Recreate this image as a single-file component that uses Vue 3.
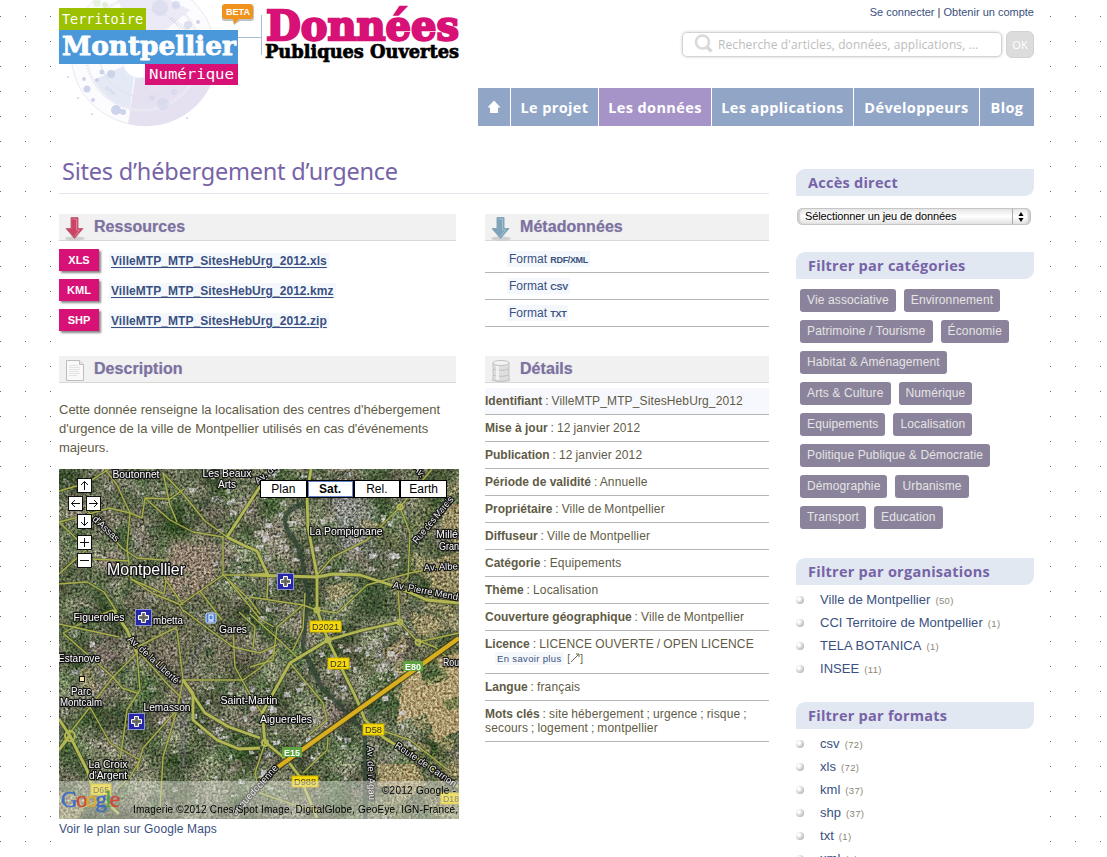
<script setup>
const nav = [
  { label: 'Le projet', cls: 'n1' },
  { label: 'Les données', cls: 'n2 active' },
  { label: 'Les applications', cls: 'n3' },
  { label: 'Développeurs', cls: 'n4' },
  { label: 'Blog', cls: 'n5' },
]
const files = [
  ['XLS', 'VilleMTP_MTP_SitesHebUrg_2012.xls'],
  ['KML', 'VilleMTP_MTP_SitesHebUrg_2012.kmz'],
  ['SHP', 'VilleMTP_MTP_SitesHebUrg_2012.zip'],
]
const formatsMeta = ['rdf/xml', 'csv', 'txt']
const details = [
  ['Identifiant', 'VilleMTP_MTP_SitesHebUrg_2012'],
  ['Mise à jour', '12 janvier 2012'],
  ['Publication', '12 janvier 2012'],
  ['Période de validité', 'Annuelle'],
  ['Propriétaire', 'Ville de Montpellier'],
  ['Diffuseur', 'Ville de Montpellier'],
  ['Catégorie', 'Equipements'],
  ['Thème', 'Localisation'],
  ['Couverture géographique', 'Ville de Montpellier'],
  ['Licence', 'LICENCE OUVERTE / OPEN LICENCE', true],
  ['Langue', 'français'],
  ['Mots clés', 'site hébergement ; urgence ; risque ; secours ; logement ; montpellier'],
]
const tags = [
  ['Vie associative', 'Environnement'],
  ['Patrimoine / Tourisme', 'Économie'],
  ['Habitat & Aménagement'],
  ['Arts & Culture', 'Numérique'],
  ['Equipements', 'Localisation'],
  ['Politique Publique & Démocratie'],
  ['Démographie', 'Urbanisme'],
  ['Transport', 'Education'],
]
const orgs = [['Ville de Montpellier', 50], ['CCI Territoire de Montpellier', 1], ['TELA BOTANICA', 1], ['INSEE', 11]]
const formats = [['csv', 72], ['xls', 72], ['kml', 37], ['shp', 37], ['txt', 1], ['xml', 1]]

// Deterministic generator for the small parcels and roofs of the aerial view.
let seed = 7
const rnd = () => (seed = (seed * 16807) % 2147483647) / 2147483647
const pick = (a) => a[Math.floor(rnd() * a.length)]
const parcels = Array.from({ length: 620 }, () => {
  const x = rnd() * 400, y = rnd() * 350
  const rural = x > 300 + rnd() * 60
  const w = rural ? 8 + rnd() * 20 : 3 + rnd() * 9
  return {
    x, y, w, h: w * (0.4 + rnd() * 0.7), r: pick([-38, -30, 20, 35, 60]),
    f: rural ? pick(['#8c8460', '#4b5b36', '#6d6f4b', '#a08e66', '#3b4a2e']) : pick(['#5a6350', '#3d5236', '#7d7a70', '#465a3d', '#8a8880', '#6b6357', '#384d33']),
    o: 0.25 + rnd() * 0.4,
  }
})
const roofs = Array.from({ length: 260 }, () => {
  const a = pick([[285, 65, 60, 55], [265, 260, 80, 60], [150, 270, 60, 60], [200, 60, 40, 90], [150, 100, 190, 200], [300, 200, 50, 40]])
  return { x: a[0] + (rnd() - 0.5) * a[2] * 2, y: a[1] + (rnd() - 0.5) * a[3] * 2, w: 2 + rnd() * 6, h: 2 + rnd() * 4, f: pick(['#b9b7b4', '#cfcbd0', '#9a97a0', '#a89f96']) }
})
const roads = [
  '0,22 28,14 50,0', '46,0 58,16 71,44 83,49 86,29 111,30 125,20', '86,29 111,51 134,63 164,68',
  '104,4 111,36 118,53', '104,4 124,25 146,52 168,68', '71,44 68,80 72,110 95,125 120,135 125,143',
  '201,106 164,106 141,122 121,136', '26,39 63,79 78,89 104,91 106,110 124,136', '71,44 50,39 20,48 0,53',
  '0,115 28,113 45,123 58,143', '72,110 105,125 107,112', '164,68 164,106', '0,53 28,80 0,105', '34,90 70,92',
  '191,106 209,104 208,131', '191,128 244,136 258,141 278,144 308,116 351,104 400,94', '258,106 274,88 308,71 341,38 373,0',
  '341,38 351,64 349,108 339,118 341,153 359,173', '359,173 400,164', '246,124 244,160 234,181', '191,145 220,171 240,190',
  '191,198 214,191 218,158 244,136', '231,194 264,234 268,251 250,266', '206,274 196,304 201,324 241,338 262,342',
  '244,304 268,281 269,268', '324,262 351,271 388,300', '357,171 376,178 391,191', '4,164 54,208 63,219 78,224', '4,164 30,150 54,141',
  '78,184 54,208 31,238 11,264 0,280', '78,184 81,221 68,241 64,271 58,308', '118,161 124,211', '78,178 118,158', '118,211 84,181',
  '124,211 184,211 201,199 220,180', '124,141 151,161 174,178 201,184 218,176', '174,161 176,198 194,231 203,244', '124,211 118,241 104,288 101,341',
  '31,238 51,274 81,291 71,308 58,320', '118,241 84,279 78,300', '81,184 111,218 123,229', '0,155 60,168', '180,143 196,158 194,180', '20,340 44,330 28,301',
  '170,112 201,150 215,158', '141,122 163,151', '164,106 190,130 201,145',
]
const mainRoads = [
  '204,13 168,68', '168,68 184,76 198,82 208,104 209,107', '252,0 248,25 249,58 258,106 258,141 269,171',
  '191,106 258,108 274,105 301,106 338,118 368,131 400,134', '341,153 304,161 269,171 231,194 216,221 203,244 206,273 228,291 241,308 258,349',
  '269,171 298,231 306,251 324,268 362,292 399,318', '54,141 68,161 78,184', '124,211 134,224 134,251 158,271 180,280 201,279', '124,211 146,244 170,258 201,269',
  '11,267 28,301 34,321 60,345', '0,250 11,267 0,281',
]
const labels = [
  [77, 9, 'Boutonnet', 47, 10.5], [168, 8, 'Les Beaux', 49, 10.5], [168, 19, 'Arts', 18, 10.5],
  [287, 66, 'La Pompignane', 73, 10.5], [388, 69, 'Millé', 22, 10.5], [390, 81, 'Gran', 20, 10.5],
  [40, 152, 'Figuerolles', 51, 10.5], [109, 155, 'mbetta', 30, 10.5], [174, 164, 'Gares', 28, 10.5],
  [20, 193, 'Estanove', 42, 10.5], [22, 226, 'Parc', 20, 10.5], [22, 237, 'Montcalm', 42, 10.5],
  [108, 242, 'Lemasson', 47, 10.5], [190, 235, 'Saint-Martin', 57, 10.5], [227, 254, 'Aiguerelles', 52, 10.5],
  [49, 299, 'La Croix', 39, 10.5], [49, 310, "d'Argent", 38, 10.5], [392, 197, 'Rou', 16, 10.5], [87, 106, 'Montpellier', 78, 16],
]
const shields = [
  [251, 152, 31, 'D2021'], [269, 189, 21, 'D21'], [304, 255, 21, 'D58'], [233, 307, 26, 'D988'], [382, 324, 20, 'D18'], [32, 315, 20, 'D65'],
]
const crosses = [[218, 104], [76, 140], [69, 244]]
const pads = [[19, 10, 'M4.500 7.500 8 4l3.500 3.500M8 4v8.500'], [10, 28, 'M7.500 4.500 4 8l3.500 3.500M4 8h8.500'], [28, 28, 'M8.500 4.500 12 8 8.500 11.500M12 8H3.500'], [19, 46, 'M4.500 8.500 8 12l3.500-3.500M8 12V3.500'], [19, 67, 'M3.500 8h9M8 3.500v9'], [19, 85, 'M3.500 8h9']]
</script>

<template>
  <div class="page">
    <header class="header">
      <svg class="logo" width="420" height="130" viewBox="50 0 420 130">
        <g class="disc">
          <circle cx="143" cy="53" r="72" fill="#fcfcfe" stroke="#e9e8f1" />
          <path d="M138 60 128 124A72 72 0 0 0 213 80Z" fill="#e5e1f1" />
          <path d="M138 53 118 0h52l20 10Z" fill="#eceaf6" />
          <path d="M136 60 94 80a52 52 0 0 0 36 29Z" fill="#e3eaf6" />
          <path d="M98 10 84 30l14-4z" fill="#edf5e2" />
          <circle cx="139" cy="62" r="16" fill="#fff" stroke="#eceff7" />
          <circle cx="143" cy="53" r="44" fill="none" stroke="#e1e3ef" />
          <circle cx="143" cy="53" r="57" fill="none" stroke="#ecebf4" stroke-width="3" stroke-dasharray="2 1" />
          <g fill="#cdd3ea">
            <circle cx="116" cy="110" r="5" /><circle cx="123" cy="112" r="3" /><circle cx="111" cy="74" r="4" /><circle cx="102" cy="72" r="2.500" /><circle cx="87" cy="89" r="3.500" /><circle cx="93" cy="100" r="2" /><circle cx="84" cy="79" r="2" /><circle cx="97" cy="80" r="2" />
            <circle cx="163" cy="104" r="6" opacity=".5" /><circle cx="152" cy="98" r="3" opacity=".5" /><circle cx="174" cy="92" r="3" opacity=".5" /><circle cx="160" cy="8" r="8" opacity=".5" /><circle cx="176" cy="5" r="4" opacity=".7" /><circle cx="188" cy="25" r="4" opacity=".7" /><circle cx="198" cy="22" r="2" /><circle cx="105" cy="5" r="3" fill="#e1eed7" /><circle cx="97" cy="3" r="4" fill="#e9f2e2" />
            <circle cx="68" cy="77" r="1" /><circle cx="78" cy="98" r="1" /><circle cx="187" cy="118" r="1" /><circle cx="92" cy="114" r="1" />
          </g>
          <path d="M106 88 115 94M171 18 188 31" stroke="#c9c7d0" stroke-width="4" stroke-dasharray="1 1.500" opacity=".6" />
        </g>
        <rect x="59" y="8" width="87" height="22" fill="#9cc100" />
        <rect x="59" y="30" width="179" height="34" fill="#4a97da" />
        <rect x="145" y="64" width="93" height="21" fill="#d71175" />
        <text class="pix" x="62" y="24" font-size="14" textLength="81" lengthAdjust="spacingAndGlyphs">Territoire</text>
        <text class="pix" x="149" y="79" font-size="14" textLength="85" lengthAdjust="spacingAndGlyphs">Numérique</text>
        <text class="slab white" x="62" y="55" font-size="25.500" textLength="174" lengthAdjust="spacingAndGlyphs">Montpellier</text>
        <path d="M238 37.500h23M261.500 15v40" stroke="#a9bbd7" fill="none" />
        <path d="M224 5h27q3 0 3 3v10q0 3-3 3h-11l-6 4-1-4h-9q-2 0-2-3V7q0-2 2-2z" fill="#9a9a9a" opacity=".6" />
        <path d="M225 4h25q3 0 3 3v9q0 3-3 3h-11l-5 5-1-5h-8q-3 0-3-3V7q0-3 3-3z" fill="#f0931c" />
        <text x="226" y="15.300" class="beta" textLength="24" lengthAdjust="spacingAndGlyphs">BETA</text>
        <text class="slab pink" x="266" y="40" font-size="41.500" textLength="193" lengthAdjust="spacingAndGlyphs">Données</text>
        <text class="slab black" x="265" y="58" font-size="18.500" textLength="194" lengthAdjust="spacingAndGlyphs">Publiques Ouvertes</text>
      </svg>
      <div class="top">
        <div class="account"><a>Se connecter</a> | <a>Obtenir un compte</a></div>
        <div class="search">
          <div class="field">
            <svg width="22" height="22" viewBox="0 0 22 22" fill="none" stroke="#d9d9d9"><circle cx="9.500" cy="9" r="6.500" stroke-width="2.600" /><path d="m14 14 4.500 4.500" stroke-width="3.600" /></svg>
            <span>Recherche d'articles, données, applications, ...</span>
          </div>
          <div class="ok"><span>OK</span></div>
        </div>
        <nav class="nav">
          <a class="home"><svg width="14" height="14" viewBox="0 0 14 14"><path d="M7 .5 13.500 7.500H11V13H3V7.500H.5z" fill="#fff" /></svg></a>
          <a v-for="n in nav" :key="n.label" :class="n.cls"><span>{{ n.label }}</span></a>
        </nav>
      </div>
    </header>

    <div class="body">
      <main class="main">
        <h1><span>Sites d’hébergement d’urgence</span></h1>
        <div class="cols">
          <div class="left">
            <section class="res">
              <h2>
                <svg width="24" height="26" viewBox="0 0 24 26"><ellipse cx="12" cy="23.500" rx="10" ry="2" fill="#bbb" opacity=".6" /><path d="M8 2.500h7v11h5l-8.500 10-8.500-10h5z" fill="#cb4365" stroke="#c06a80" /><path d="M9.500 4h4v11h3l-5 6.500" fill="none" stroke="#dd8095" /></svg>
                Ressources
              </h2>
              <div v-for="f in files" :key="f[0]" class="file"><b>{{ f[0] }}</b><a>{{ f[1] }}</a></div>
            </section>
            <section>
              <h2>
                <svg width="24" height="26" viewBox="0 0 24 26"><path d="M3.500 3.500h13l4 4v16h-17z" fill="#f9f9f9" stroke="#bdbdbd" /><path d="M16.500 3.500v4h4" fill="#e5e5e5" stroke="#bdbdbd" /><path d="M6 8.500h9M6 10.500h11M6 12.500h11M6 14.500h10M6 16.500h11M6 18.500h8" stroke="#e2e2e2" /></svg>
                Description
              </h2>
              <p>Cette donnée renseigne la localisation des centres d'hébergement d'urgence de la ville de Montpellier utilisés en cas d'événements majeurs.</p>
              <div class="map">
                <svg width="400" height="350" viewBox="0 0 400 350">
                  <defs>
                    <filter id="grain" x="0" y="0" width="100%" height="100%" color-interpolation-filters="sRGB">
                      <feTurbulence type="fractalNoise" baseFrequency=".42" numOctaves="3" seed="4" />
                      <feColorMatrix values="1.500 .5 0 0 -.45  1.500 .5 0 0 -.44  1.500 .5 0 0 -.45  0 0 0 0 1" />
                    </filter>
                    <filter id="land" x="0" y="0" width="100%" height="100%" color-interpolation-filters="sRGB">
                      <feTurbulence type="fractalNoise" baseFrequency=".03" numOctaves="4" seed="9" />
                      <feColorMatrix values=".9 0 0 0 -.07  .65 .25 0 0 -.05  .8 0 0 0 -.1  0 0 0 0 1" />
                    </filter>
                    <filter id="soft" x="-20%" y="-20%" width="140%" height="140%"><feGaussianBlur stdDeviation="5" /></filter>
                  </defs>
                  <rect width="400" height="350" fill="#56604a" />
                  <rect width="400" height="350" filter="url(#land)" opacity=".6" />
                  <g filter="url(#soft)">
                    <path d="M112 70 155 76 160 110 125 136 105 110Z" fill="#857566" />
                    <path d="M60 120h110l20 90H90z" fill="#65604f" opacity=".6" />
                    <path d="M270 15 310 30 325 90 280 80Z" fill="#85868a" opacity=".6" />
                  </g>
                  <rect v-for="(p, i) in parcels" :key="'p' + i" :x="p.x" :y="p.y" :width="p.w" :height="p.h" :fill="p.f" :opacity="p.o" :transform="`rotate(${p.r} ${p.x} ${p.y})`" />
                  <g fill="#a59068">
                    <path d="M346 195 400 184v78l-22 8-12-26-28 10z" /><path d="M318 295h40l10 22h-48z" opacity=".75" /><path d="M386 35h14v45l-18-20z" opacity=".7" /><path d="M378 90 400 82v50l-30-12z" opacity=".6" /><path d="M266 118 290 112 300 120 272 134z" opacity=".5" /><path d="M0 322 30 330 20 350H0z" opacity=".6" /><path d="M20 200 32 198 38 222 24 224z" opacity=".4" /><path d="M352 150 372 146 382 160 360 168z" opacity=".5" />
                  </g>
                  <path d="M362 205l24-7 4 12-22 7zM384 232l16-5v12l-12 3z" fill="#5d6a40" opacity=".7" />
                  <g fill="#38512f" opacity=".75"><path d="M306 226 330 220 342 236 312 246z" /><path d="M290 118 324 110 330 150 300 140z" opacity=".6" /><path d="M360 196 378 190 382 206 364 212z" /><path d="M56 62l12-6 6 18-10 12z" /><path d="M8 270l22 18-6 22-20-10z" opacity=".5" /><path d="M266 300l28 10-4 30-30-6z" opacity=".6" /></g>
                  <rect v-for="(p, i) in roofs" :key="'r' + i" :x="p.x" :y="p.y" :width="p.w" :height="p.h" :fill="p.f" opacity=".7" transform="rotate(-6 200 175)" />
                  <path d="M148 166 126 205 124 300" stroke="#60615c" stroke-width="8" fill="none" opacity=".6" />
                  <rect class="grain" width="400" height="350" filter="url(#grain)" />
                  <path d="M246 34C220 42 222 56 236 72 246 88 244 108 249 124L244 178 262 218 282 238 306 264 306 350" stroke="#2d4233" stroke-width="4.500" fill="none" opacity=".75" />
                  <g fill="none" stroke-linejoin="round">
                    <polyline v-for="r in roads" :key="'a' + r" :points="r" stroke="#3e4722" stroke-width="3" opacity=".45" />
                    <polyline v-for="r in mainRoads" :key="'b' + r" :points="r" stroke="#3e4722" stroke-width="5" opacity=".5" />
                    <polyline v-for="r in roads" :key="'c' + r" :points="r" stroke="#aaaf4c" stroke-width="1.400" />
                    <polyline v-for="r in mainRoads" :key="'d' + r" :points="r" stroke="#b3b854" stroke-width="2.800" />
                    <path d="M400 169 219 298" stroke="#40401c" stroke-width="7" opacity=".8" /><path d="M400 169 219 298" stroke="#d9ae1f" stroke-width="4" />
                    <path d="M219 298 176 350" stroke="#c9c8a0" stroke-width="2" opacity=".6" />
                    <g stroke="#b3b854" stroke-width="2"><circle cx="11" cy="267" r="5" /><circle cx="341" cy="38" r="2.500" /><circle cx="206" cy="274" r="3" /><circle cx="258" cy="141" r="2.500" /><circle cx="269" cy="171" r="2.500" /><circle cx="341" cy="153" r="2.500" /><circle cx="359" cy="173" r="2.500" /></g>
                  </g>
                  <g class="lab">
                    <text v-for="l in labels" :key="l[2]" :x="l[0]" :y="l[1]" :font-size="l[4]" :textLength="l[3]" lengthAdjust="spacingAndGlyphs">{{ l[2] }}</text>
                    <g class="street">
                      <text transform="translate(45 62) rotate(43)">d'Assas</text>
                      <text transform="translate(68 171) rotate(42)" textLength="66">Av. de la Liberté</text>
                      <text transform="translate(374 51) rotate(-50)" dy="3" textLength="58">Rue des Mareis</text>
                      <text transform="translate(382 101) rotate(-3)">Av. Albe</text>
                      <text transform="translate(366 125) rotate(11)" textLength="66">Av. Pierre Mend</text>
                      <text transform="translate(365 298) rotate(34)" textLength="72">Route de Carnon</text>
                      <text transform="translate(309 304) rotate(88)" textLength="54">Av. de l'Agau</text>
                      <text transform="translate(196 321) rotate(-48)" dy="3" textLength="64">anguedocienne</text>
                      <text transform="translate(209 7) rotate(-40)">Av. de</text>
                      <text transform="translate(358 4) rotate(52)">Av.</text>
                    </g>
                  </g>
                  <g v-for="s in shields" :key="s[3]" class="shield"><rect :x="s[0]" :y="s[1]" :width="s[2]" height="11" fill="#f5d90b" stroke="#d0b400" /><text :x="s[0] + s[2] / 2" :y="s[1] + 9" fill="#333" :textLength="s[2] - 4" lengthAdjust="spacingAndGlyphs">{{ s[3] }}</text></g>
                  <g class="shield" font-weight="bold"><rect x="344" y="192" width="20" height="10" fill="#5fa341" /><text x="354" y="200.500" fill="#fff" textLength="16" lengthAdjust="spacingAndGlyphs">E80</text><rect x="223" y="278" width="20" height="10" fill="#5fa341" /><text x="233" y="286.500" fill="#fff" textLength="16" lengthAdjust="spacingAndGlyphs">E15</text></g>
                  <g v-for="c in crosses" :key="c[0]" :transform="`translate(${c[0]} ${c[1]})`"><rect x=".5" y=".5" width="16" height="16" fill="#2727a5" stroke="#8b94cf" /><path d="M6.500 3.500h4v3h3v4h-3v3h-4v-3h-3v-4h3z" fill="#77786d" stroke="#fff" /><path d="M8.500 5v7M5 8.500h7" stroke="#5d5e55" /></g>
                  <g transform="translate(147 144)"><rect width="10" height="10" rx="1.500" fill="#4c7fd0" stroke="#cfdcf2" /><rect x="3" y="2" width="4" height="5" fill="none" stroke="#fff" /><path d="M2.500 9l1-1h3l1 1" stroke="#fff" fill="none" /></g>
                  <rect x="20.500" y="207.500" width="5" height="5" fill="#f7e4b1" stroke="#111" />
                  <rect y="312" width="400" height="38" fill="#e9e9df" opacity=".45" />
                  <text class="google" x="2" y="338" font-size="23" textLength="59"><tspan fill="#3565c8" stroke="#3565c8">G</tspan><tspan fill="#d14232" stroke="#d14232">o</tspan><tspan fill="#e0ac20" stroke="#e0ac20">o</tspan><tspan fill="#3565c8" stroke="#3565c8">g</tspan><tspan fill="#4f9b4a" stroke="#4f9b4a">l</tspan><tspan fill="#d14232" stroke="#d14232">e</tspan></text>
                  <text class="credit" x="323" y="325" textLength="74">©2012 Google -</text>
                  <text class="credit" x="74" y="344" textLength="325">Imagerie ©2012 Cnes/Spot Image, DigitalGlobe, GeoEye, IGN-France,</text>
                  <g v-for="(p, i) in pads" :key="'k' + i" :transform="`translate(${p[0] - 1} ${p[1] - 1})`"><rect x=".5" y=".5" width="14" height="14" fill="#fff" stroke="#111" /><path :d="p[2]" transform="translate(-.5 -.5)" fill="none" stroke="#111" /></g>
                </svg>
                <div class="types"><span>Plan</span><span class="on">Sat.</span><span>Rel.</span><span>Earth</span></div>
              </div>
              <a class="gmaps">Voir le plan sur Google Maps</a>
            </section>
          </div>
          <div class="right">
            <section class="meta">
              <h2>
                <svg width="24" height="26" viewBox="0 0 24 26"><ellipse cx="12" cy="23.500" rx="10" ry="2" fill="#bbb" opacity=".6" /><path d="M8 2.500h7v11h5l-8.500 10-8.500-10h5z" fill="#7ea4bb" stroke="#86a6b9" /><path d="M9.500 4h4v11h3l-5 6.500" fill="none" stroke="#a3c0d0" /></svg>
                Métadonnées
              </h2>
              <div v-for="f in formatsMeta" :key="f" class="mrow"><a>Format <i>{{ f }}</i></a></div>
            </section>
            <section>
              <h2>
                <svg width="24" height="26" viewBox="0 0 24 26"><ellipse cx="12" cy="23" rx="10" ry="2" fill="#d5d5d5" /><g fill="#dedede" stroke="#c2c2c2"><path d="M4 18v4c0 3 16 3 16 0v-4z" /><path d="M4 12v5c0 3 16 3 16 0v-5z" /><path d="M4 6v5c0 3 16 3 16 0V6z" /><ellipse cx="12" cy="6" rx="8" ry="2.500" fill="#f3f3f3" /></g><path d="M8.500 9v14" stroke="#f8f8f8" stroke-width="3" opacity=".8" /></svg>
                Détails
              </h2>
              <div class="details">
                <div v-for="(d, i) in details" :key="d[0]" class="drow" :class="{ first: i === 0, lic: d[2] }">
                  <b>{{ d[0] }}</b> : {{ d[1] }}
                  <div v-if="d[2]" class="more"><a>En savoir plus</a> <span>[<svg width="10" height="10" viewBox="0 0 10 10" fill="none" stroke="#6b6550"><path d="M1 9 9 1M6 1h3v3" /></svg>]</span></div>
                </div>
              </div>
            </section>
          </div>
        </div>
      </main>

      <aside class="side">
        <h3>Accès direct</h3>
        <div class="select"><span>Sélectionner un jeu de données</span><i><svg width="8" height="10" viewBox="0 0 8 10"><path d="M4 0 6.500 4h-5zM4 10 1.500 6h5z" /></svg></i></div>
        <h3>Filtrer par catégories</h3>
        <div class="tags"><div v-for="(row, i) in tags" :key="i"><a v-for="t in row" :key="t">{{ t }}</a></div></div>
        <h3>Filtrer par organisations</h3>
        <ul><li v-for="o in orgs" :key="o[0]"><i></i><a>{{ o[0] }}</a><small>({{ o[1] }})</small></li></ul>
        <h3>Filtrer par formats</h3>
        <ul><li v-for="o in formats" :key="o[0]"><i></i><a>{{ o[0] }}</a><small>({{ o[1] }})</small></li></ul>
      </aside>
    </div>
  </div>
</template>

<style>
body { background: #fff; }
</style>

<style scoped>
.page { box-sizing: border-box; width: 1107px; height: 857px; overflow: hidden; padding: 0 73px 0 59px; font-family: "Liberation Sans", Arial, sans-serif; font-size: 12px; line-height: 14px; color: #5f5b46;
  background: linear-gradient(#fff, #fff) 51px 0 / 999px 100% no-repeat, conic-gradient(from 90deg at 24px 24px, #6c6c6c 0 25%, transparent 0) 1px -8px / 25px 25px; }
a { color: #3a5080; }
h1, h2, h3, p, ul { margin: 0; padding: 0; font-weight: normal; }
.header { display: flex; height: 156px; }
.logo { flex: none; margin-left: -9px; }
.top { flex: 1; display: flex; flex-direction: column; align-items: flex-end; }
.account { margin-top: 5px; font-size: 11px; line-height: 14px; color: #334; white-space: nowrap; }
.search { display: flex; gap: 4px; margin-top: 10px; height: 30px; align-items: center; }
.field { box-sizing: border-box; width: 320px; height: 25px; display: flex; align-items: center; padding-left: 10px; border: 1px solid #d4d4d4; border-radius: 5px; box-shadow: 0 0 3px #ccc; font: 12px "Open Sans", sans-serif; color: #bdbdbd; white-space: nowrap; }
.field span { margin-left: 3px; letter-spacing: .09px; }
.ok { box-sizing: border-box; width: 28px; height: 27px; border-radius: 6px; background: #dcdcdc; border: 1px solid #d2d2d2; color: #fff; font: 11px/26px "Open Sans", sans-serif; text-align: center; }
.nav { display: flex; gap: 1px; margin-top: 29px; width: 556px; height: 38px; }
.nav a { display: flex; align-items: center; justify-content: center; background: #91a5c6; color: #fff; font: 700 14.500px "Open Sans", sans-serif; letter-spacing: .38px; white-space: nowrap; }
.nav .home { width: 32px; } .nav .n1 { width: 87px; } .nav .n2 { width: 112px; } .nav .n3 { width: 141px; } .nav .n4 { width: 125px; } .nav .n5 { flex: 1; }
.nav .active { background: #a694c8; }
.body { display: grid; grid-template-columns: 710px 238px; gap: 27px; }
h1 { box-sizing: border-box; height: 38px; border-bottom: 1px solid #e4e3ec; padding-left: 3px; font: 23.500px/31px "Noto Sans", "Open Sans", sans-serif; color: #7763a7; letter-spacing: -.22px; white-space: nowrap; }
.cols { display: grid; grid-template-columns: 397px 284px; gap: 29px; margin-top: 20px; }
h2 { box-sizing: border-box; height: 27px; display: flex; align-items: center; background: #f1f1f1; border-bottom: 1px solid #d8d8d8; font: bold 16px/26px "Liberation Sans", sans-serif; color: #7d729f; text-shadow: 0 0 1px #b5aecd; padding-bottom: 1px; letter-spacing: .05px; }
h2 svg { margin: 3px 7px 0 4px; flex: none; }
.res, .meta { height: 142px; }
.file { display: flex; height: 23px; margin-top: 7px; align-items: center; }
h2 + .file { margin-top: 8px; }
.file b { width: 40px; height: 22px; margin-top: -2px; line-height: 22px; background: #d71175; color: #fff; font-size: 11px; text-align: center; box-shadow: 2px 2px 2px #888; }
.file a { margin-left: 10px; padding: 1px 2px; background: #f4f8fd; font-weight: bold; font-size: 12px; text-decoration: underline; text-underline-offset: 2px; letter-spacing: .06px; }
p { margin: 17px 0 0; font-size: 13px; line-height: 19px; height: 69px; width: 400px; }
.map { position: relative; width: 400px; height: 350px; }
.map > svg { display: block; }
.grain { mix-blend-mode: overlay; opacity: .7; }
.types { position: absolute; left: 201px; top: 11px; display: flex; box-sizing: border-box; width: 187px; height: 18px; border: 1px solid #000; background: #000; gap: 2px; font-size: 12px; line-height: 16px; color: #000; }
.types span { flex: 1; background: #fff; text-align: center; }
.types .on { font-weight: bold; box-shadow: inset 0 0 0 1px #6683cd; }
.gmaps { display: block; margin-top: 3px; letter-spacing: .14px; }
.mrow { box-sizing: border-box; height: 27px; padding: 6px 0 0 22px; border-bottom: 1px solid #b5b5b5; }
h2 + .mrow { height: 32px; padding-top: 11px; }
.mrow a { background: #f4f8fd; padding: 1px 2px; }
.mrow i { font-style: normal; font-weight: bold; font-size: 9px; text-transform: uppercase; letter-spacing: -.35px; }
.details { margin-top: 5px; letter-spacing: .16px; word-spacing: -.6px; }
.details b { letter-spacing: 0; word-spacing: 0; }
.drow.lic { letter-spacing: .12px; word-spacing: -.4px; }
.drow { padding: 6px 0; border-bottom: 1px solid #b5b5b5; }
.drow.first { background: #f7f8fd; letter-spacing: .12px; }
.more { height: 16px; padding-left: 10px; font-size: 9.500px; line-height: 16px; word-spacing: 0; }
.more a { background: #f4f8fd; padding: 1px 2px; letter-spacing: .35px; }
.more span { margin-left: 1px; font-size: 10px; }
.more svg { vertical-align: -1px; }
.side { padding-top: 13px; }
h3 { height: 27px; padding-left: 12px; background: #e1e8f1; border-radius: 9px 0 9px 0; font: 700 14.500px/27px "Open Sans", sans-serif; letter-spacing: .25px; color: #7763a7; white-space: nowrap; }
.select { box-sizing: border-box; display: flex; width: 234px; height: 17px; margin: 12px 0 27px 1px; border: 1px solid #c6c6c6; border-radius: 5px; background: linear-gradient(#e6e6e6, #fff 50%, #e2e2e2); font-size: 11px; line-height: 15px; color: #000; box-shadow: inset 3px 0 2px -1px #ccc, inset -3px 0 2px -1px #ccc; }
.select span { flex: 1; padding-left: 7px; letter-spacing: -.11px; }
.select i { width: 17px; border-left: 1px solid #aaa; display: flex; align-items: center; }
.select i svg { margin-left: 4px; }
.tags { padding: 10px 0 0 4px; height: 269px; }
.tags div { display: flex; gap: 8px; height: 31px; }
.tags a { height: 23px; padding: 0 7px; border-radius: 3px; background: #8a839b; color: #e6e4e4; line-height: 22px; letter-spacing: .13px; white-space: nowrap; }
ul { list-style: none; padding-top: 3px; height: 114px; }
li { display: flex; align-items: center; height: 23px; font-size: 13px; }
li i { width: 8px; height: 8px; margin-right: 16px; border-radius: 50%; background: radial-gradient(circle at 35% 35%, #fff 15%, #cfcfcf 55%, #999); }
li a { letter-spacing: .04px; }
li small { margin: 2px 0 0 5px; font-size: 9.500px; letter-spacing: .35px; color: #8c8778; }
.slab { font-family: "DejaVu Serif", serif; font-weight: bold; }
.white { fill: #fff; stroke: #fff; stroke-width: .8; } .pink { fill: #d71175; stroke: #d71175; stroke-width: 2.400; } .black { fill: #000; stroke: #000; stroke-width: .7; }
.pix { font-family: "DejaVu Sans Mono", monospace; fill: #fff; }
.beta { font: bold 9.500px "Liberation Sans", sans-serif; fill: #fff; }
.lab text { font-family: "Liberation Sans", sans-serif; fill: #fff; stroke: #151515; stroke-width: 2.500px; stroke-linejoin: round; paint-order: stroke; text-anchor: middle; }
.street text { font-size: 9.500px; text-anchor: middle; fill: #eee; }
.lab .street text:nth-child(2) { text-anchor: start; }
.shield text { font-family: "Liberation Sans", sans-serif; font-size: 9.500px; text-anchor: middle; }
.google { font-family: "Liberation Serif", serif; stroke-width: .5; opacity: .9; }
.credit { font: 10px "Liberation Sans", sans-serif; fill: #000; }
</style>
